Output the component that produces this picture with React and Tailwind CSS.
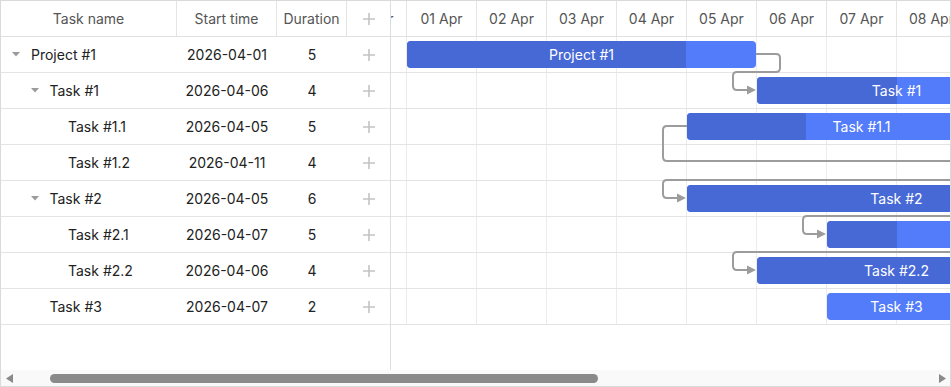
import { useMemo } from "react";

const DAYS = ["31 Mar", "01 Apr", "02 Apr", "03 Apr", "04 Apr", "05 Apr", "06 Apr", "07 Apr", "08 Apr"];

// day index: 0 = 01 Apr
const TASKS = [
  { name: "Project #1", start: "2026-04-01", day: 0, dur: 5, level: 0, parent: true, progress: 0.8 },
  { name: "Task #1", start: "2026-04-06", day: 5, dur: 4, level: 1, parent: true, progress: 0.5 },
  { name: "Task #1.1", start: "2026-04-05", day: 4, dur: 5, level: 2, progress: 0.34 },
  { name: "Task #1.2", start: "2026-04-11", day: 10, dur: 4, level: 2, progress: 0 },
  { name: "Task #2", start: "2026-04-05", day: 4, dur: 6, level: 1, parent: true, progress: 0.7 },
  { name: "Task #2.1", start: "2026-04-07", day: 6, dur: 5, level: 2, progress: 0.2 },
  { name: "Task #2.2", start: "2026-04-06", day: 5, dur: 4, level: 2, progress: 0.8 },
  { name: "Task #3", start: "2026-04-07", day: 6, dur: 2, level: 1, progress: 0 },
];

const DAY_W = 70;
const BAR_X0 = 16;

// links, in timeline-body coordinates
const LINKS = [
  { pts: [[365, 17], [389, 17], [389, 35], [342, 35], [342, 53], [358, 53]], arrow: [365, 53] },
  { pts: [[296, 89], [272, 89], [272, 124], [580, 124]] },
  { pts: [[580, 143], [272, 143], [272, 161], [288, 161]], arrow: [295, 161] },
  { pts: [[580, 179], [412, 179], [412, 197], [428, 197]], arrow: [435, 197] },
  { pts: [[580, 215], [342, 215], [342, 233], [358, 233]], arrow: [365, 233] },
];

const roundedPath = (pts, r = 4) => {
  let d = `M${pts[0][0]} ${pts[0][1]}`;
  for (let i = 1; i < pts.length - 1; i++) {
    const [px, py] = pts[i - 1];
    const [cx, cy] = pts[i];
    const [nx, ny] = pts[i + 1];
    const inX = cx - Math.sign(cx - px) * r;
    const inY = cy - Math.sign(cy - py) * r;
    const outX = cx + Math.sign(nx - cx) * r;
    const outY = cy + Math.sign(ny - cy) * r;
    d += ` L${inX} ${inY} Q${cx} ${cy} ${outX} ${outY}`;
  }
  const last = pts[pts.length - 1];
  d += ` L${last[0]} ${last[1]}`;
  return d;
};

const PlusIcon = () => (
  <svg width="14" height="14" viewBox="0 0 14 14">
    <path d="M7 1V13M1 7H13" stroke="#c4c4c4" strokeWidth="1.6" />
  </svg>
);

const Caret = () => (
  <svg width="8" height="5" viewBox="0 0 8 5">
    <path d="M0 0H8L4 4.5Z" fill="#9b9b9b" />
  </svg>
);

const GridRow = ({ task }) => (
  <div className="h-9 border-b border-[#e4e4e4] flex items-center text-[14px] text-[#222]">
    <div className="w-[176px] flex items-center" style={{ paddingLeft: 11 + task.level * 18.5 }}>
      <div className="w-[19px] flex items-center">{task.parent && <Caret />}</div>
      <span>{task.name}</span>
    </div>
    <div className="w-[100px] text-center">{task.start}</div>
    <div className="w-[70px] text-center">{task.dur}</div>
    <div className="flex-1 flex justify-center">
      <PlusIcon />
    </div>
  </div>
);

const DayCells = ({ header }) => (
  <div className="flex h-full -ml-[54px]">
    {DAYS.map((d) => (
      <div
        key={d}
        className={
          header
            ? "w-[70px] shrink-0 h-full border-r border-[#e4e4e4] flex items-center justify-center text-[14px] text-[#555]"
            : "w-[70px] shrink-0 h-full border-r border-[#ececec]"
        }
      >
        {header ? d : null}
      </div>
    ))}
  </div>
);

const Bar = ({ task }) => {
  const width = task.dur * DAY_W - 1;
  const left = BAR_X0 + task.day * DAY_W;
  const done = Math.round(width * task.progress);
  return (
    <div
      className="absolute top-[4px] h-[27px] rounded-[4px] bg-[#537cfa] overflow-hidden flex items-center justify-center"
      style={{ left, width }}
    >
      <div className="absolute left-0 top-0 h-full bg-[#4769d6]" style={{ width: done }} />
      <span className="relative text-white text-[14px]">{task.name}</span>
    </div>
  );
};

export default function App() {
  const paths = useMemo(() => LINKS.map((l) => roundedPath(l.pts)), []);

  return (
    <div className="w-[951px] h-[387px] border border-[#dadada] bg-white flex flex-col overflow-hidden font-['Inter','Liberation_Sans',sans-serif]">
      <div className="flex flex-1 min-h-0">
        <div className="w-[390px] shrink-0 border-r border-[#dedede] flex flex-col">
          <div className="h-9 border-b border-[#e0e0e0] flex text-[14px] text-[#555]">
            <div className="w-[176px] border-r border-[#e4e4e4] flex items-center justify-center">Task name</div>
            <div className="w-[100px] border-r border-[#e4e4e4] flex items-center justify-center">Start time</div>
            <div className="w-[70px] border-r border-[#e4e4e4] flex items-center justify-center">Duration</div>
            <div className="flex-1 flex items-center justify-center">
              <PlusIcon />
            </div>
          </div>
          {TASKS.map((t) => (
            <GridRow key={t.name} task={t} />
          ))}
        </div>

        <div className="flex-1 min-w-0 overflow-hidden flex flex-col">
          <div className="h-9 shrink-0 border-b border-[#e0e0e0]">
            <DayCells header />
          </div>
          <div className="relative">
            {TASKS.map((t) => (
              <div key={t.name} className="relative h-9 border-b border-[#e4e4e4]">
                <DayCells />
                <Bar task={t} />
              </div>
            ))}
            <svg className="absolute left-0 top-0 pointer-events-none" width="600" height="300" overflow="visible">
              {paths.map((d, i) => (
                <path key={i} d={d} fill="none" stroke="#9c9c9c" strokeWidth="2" />
              ))}
              {LINKS.filter((l) => l.arrow).map((l, i) => {
                const [x, y] = l.arrow;
                return <path key={i} d={`M${x - 9} ${y - 4.5}L${x} ${y}L${x - 9} ${y + 4.5}Z`} fill="#9c9c9c" />;
              })}
            </svg>
          </div>
        </div>
      </div>

      <div className="h-4 shrink-0 bg-[#f9f9f9] flex items-center relative">
        <svg className="ml-[5px]" width="7" height="9" viewBox="0 0 7 9">
          <path d="M7 0V9L0 4.5Z" fill="#8a8a8a" />
        </svg>
        <div className="ml-[37px] w-[548px] h-[9px] rounded-full bg-[#8a8a8a]" />
        <svg className="ml-auto mr-[4px]" width="7" height="9" viewBox="0 0 7 9">
          <path d="M0 0V9L7 4.5Z" fill="#8a8a8a" />
        </svg>
      </div>
    </div>
  );
}
